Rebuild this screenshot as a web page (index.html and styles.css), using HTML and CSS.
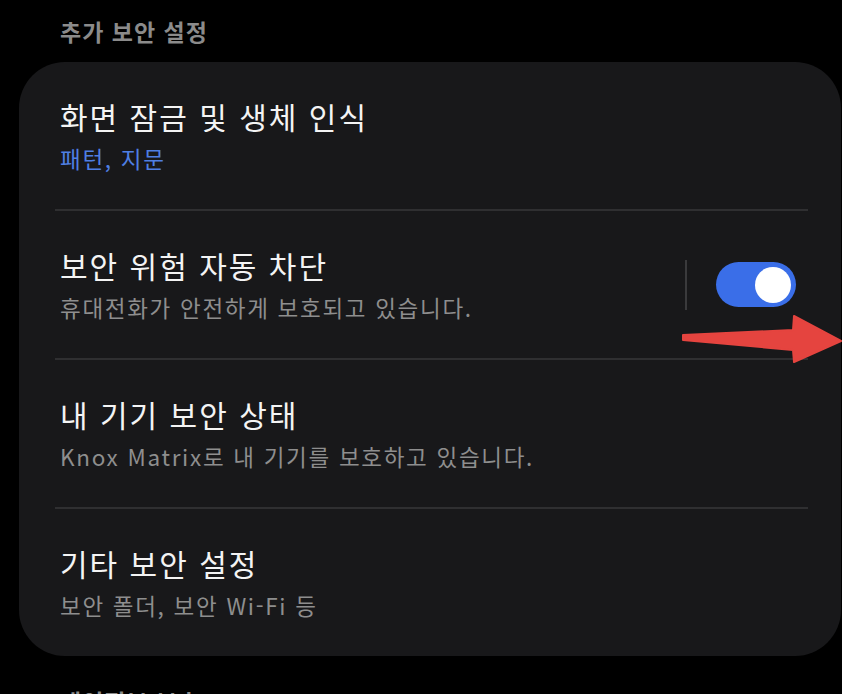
FILE: index.html
```html
<!DOCTYPE html>
<html lang="ko">
<head>
<meta charset="utf-8">
<link rel="stylesheet" href="styles.css">
</head>
<body>
<div class="page">
  <h2 class="section-title">추가 보안 설정</h2>
  <div class="card">
    <div class="row">
      <div class="texts">
        <div class="title">화면 잠금 및 생체 인식</div>
        <div class="sub blue">패턴, 지문</div>
      </div>
    </div>
    <div class="row">
      <div class="texts">
        <div class="title">보안 위험 자동 차단</div>
        <div class="sub">휴대전화가 안전하게 보호되고 있습니다.</div>
      </div>
      <div class="vsep"></div>
      <div class="toggle"><div class="knob"></div></div>
    </div>
    <div class="row">
      <div class="texts">
        <div class="title">내 기기 보안 상태</div>
        <div class="sub">Knox Matrix로 내 기기를 보호하고 있습니다.</div>
      </div>
    </div>
    <div class="row">
      <div class="texts">
        <div class="title">기타 보안 설정</div>
        <div class="sub">보안 폴더, 보안 Wi-Fi 등</div>
      </div>
    </div>
  </div>
  <h2 class="section-title next">개인정보 보호</h2>
  <svg class="arrow" width="842" height="694" viewBox="0 0 842 694">
    <polygon points="683,335 793,330 794,316 841,341 794,362 793,350 683,340" fill="#e5443f" stroke="#e5443f" stroke-width="2" stroke-linejoin="round"/>
  </svg>
</div>
</body>
</html>
```

FILE: styles.css
```css
html, body {
  margin: 0;
  padding: 0;
  background: #000;
  overflow: hidden;
}
.page {
  position: relative;
  width: 842px;
  height: 694px;
  overflow: hidden;
  font-family: "Noto Sans CJK KR", "Noto Sans", sans-serif;
}
.section-title {
  margin: 16px 0 0 60px;
  font-size: 23px;
  line-height: 30px;
  font-weight: 700;
  letter-spacing: 1px;
  color: #8b8b8b;
}
.section-title.next {
  margin-top: 30px;
}
.card {
  margin: 16px 1px 0 19px;
  background: #18181a;
  border-radius: 46px;
  padding: 0 33px 0 36px;
}
.row {
  display: flex;
  align-items: center;
  padding: 36px 0 36px 5px;
  height: 75px;
  border-top: 2px solid #2f2f31;
}
.row:first-child {
  border-top: none;
}
.texts {
  flex: 1;
}
.title {
  font-size: 30px;
  line-height: 36px;
  letter-spacing: 2px;
  color: #f4f4f4;
}
.sub {
  font-size: 22.5px;
  line-height: 30px;
  margin-top: 9px;
  letter-spacing: 1.7px;
  color: #8e8e8e;
}
.sub.blue {
  color: #4f7fe3;
}
.vsep {
  width: 2px;
  height: 50px;
  background: #3a3a3c;
  margin-right: 29px;
}
.toggle {
  width: 80px;
  height: 45px;
  border-radius: 23px;
  background: #3a6ee8;
  margin-right: 12px;
  display: flex;
  align-items: center;
  justify-content: flex-end;
  padding-right: 5px;
  box-sizing: border-box;
}
.knob {
  width: 36px;
  height: 36px;
  border-radius: 50%;
  background: #fff;
}
.arrow {
  position: absolute;
  left: 0;
  top: 0;
}
```
